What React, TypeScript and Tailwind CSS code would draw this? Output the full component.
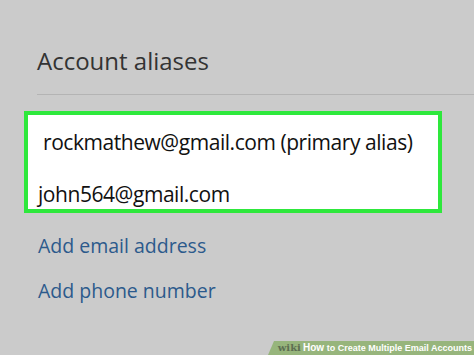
import React from "react";

const aliases = ["rockmathew@gmail.com (primary alias)", "john564@gmail.com"];

const App = () => {
  return (
    <div className="relative h-[355px] w-[474px] overflow-hidden bg-[#cbcbcb] font-['Open_Sans',sans-serif]">
      <div className="pt-[45px] pl-[37px]">
        <h1 className="text-[24px] leading-[32px] text-[#333333]">Account aliases</h1>
        <div className="mt-[17px] h-px bg-[#b4b4b4]" />
      </div>

      <div className="mt-[16px] ml-[24px] h-[102px] w-[418px] border-[4px] border-[#2ee83c] bg-white">
        <div className="pt-[13px] pl-[15px] text-[21px] leading-[28px] tracking-[-0.45px] text-[#111111]">
          {aliases[0]}
        </div>
        <div className="pt-[24px] pl-[10px] text-[21px] leading-[28px] tracking-[-0.45px] text-[#111111]">
          {aliases[1]}
        </div>
      </div>

      <div className="mt-[19px] flex flex-col gap-[17px] pl-[38px] text-[19.5px] leading-[28px] text-[#2c5a8c]">
        <span>Add email address</span>
        <span>Add phone number</span>
      </div>

      {/* wikiHow caption strip */}
      <div className="absolute bottom-0 right-0 flex h-[14px] w-[206px] items-center justify-end bg-[#97b57c] pr-[2px] [clip-path:polygon(6px_0,100%_0,100%_100%,0_100%)]">
        <span className="font-['DejaVu_Serif',serif] text-[10px] font-bold leading-none text-[#5d6e52]">wiki</span>
        <span className="ml-[2px] font-['Liberation_Sans',sans-serif] text-[10px] font-bold leading-none text-white">
          How <span className="text-[9px]">to Create Multiple Email Accounts</span>
        </span>
      </div>
    </div>
  );
};

export default App;
